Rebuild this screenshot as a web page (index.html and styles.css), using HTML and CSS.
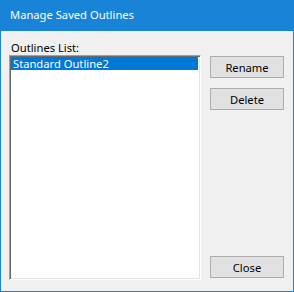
FILE: index.html
```html
<!DOCTYPE html>
<html lang="en">
<head>
  <meta charset="UTF-8">
  <title>Manage Saved Outlines</title>
  <link rel="stylesheet" href="styles.css">
</head>
<body>
  <div class="window">
    <div class="titlebar">Manage Saved Outlines</div>
    <div class="client">
      <div class="list-col">
        <label class="list-label">Outlines List:</label>
        <div class="listbox">
          <div class="item selected">Standard Outline2</div>
        </div>
      </div>
      <div class="btn-col">
        <button class="btn">Rename</button>
        <button class="btn">Delete</button>
        <button class="btn close">Close</button>
      </div>
    </div>
  </div>
</body>
</html>
```
FILE: styles.css
```css
body {
  margin: 0;
  font-family: "Noto Sans", "Open Sans", sans-serif;
  font-size: 11.2px;
}

.window {
  width: 294px;
  height: 292px;
  box-sizing: border-box;
  border: 1px solid #1883d7;
  border-top: none;
  background: #f0f0f0;
  display: flex;
  flex-direction: column;
}

.titlebar {
  height: 31px;
  margin: 0 -1px;
  background: #1883d7;
  color: #fff;
  padding-left: 10px;
  line-height: 30px;
  font-size: 11.2px;
}

.client {
  flex: 1;
  display: flex;
  gap: 9px;
  padding: 9px 9px 11px 8px;
}

.list-col {
  display: flex;
  flex-direction: column;
  width: 192px;
}

.list-label {
  display: block;
  height: 15px;
  line-height: 15px;
  padding-left: 2px;
  color: #000;
}

.listbox {
  flex: 1;
  background: #fff;
  border-top: 1px solid #a0a0a0;
  border-left: 1px solid #a0a0a0;
  border-right: 1px solid #fff;
  border-bottom: 1px solid #fff;
  box-shadow: inset 1px 1px 0 #696969, inset -1px -1px 0 #e3e3e3;
  padding: 1px 2px 2px 1px;
}

.item {
  height: 13px;
  line-height: 13px;
  padding-left: 2px;
  white-space: nowrap;
}

.item.selected {
  background: #0078d7;
  color: #fff;
}

.btn-col {
  display: flex;
  flex-direction: column;
  gap: 10px;
  padding-top: 16px;
}

.btn {
  width: 74px;
  height: 22px;
  background: #e1e1e1;
  border: 1px solid #adadad;
  font-family: inherit;
  font-size: 11.2px;
  color: #000;
  padding: 0;
}

.btn.close {
  margin-top: auto;
  margin-bottom: 2px;
}
```
